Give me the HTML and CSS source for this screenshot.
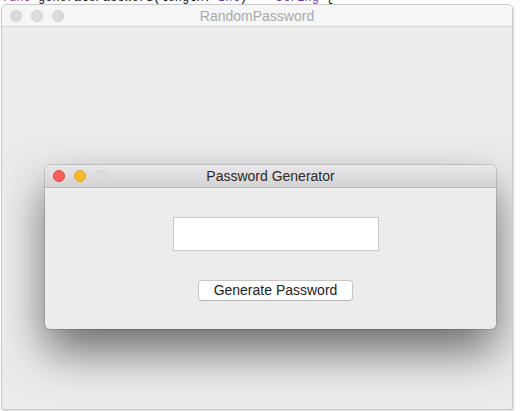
FILE: index.html
```html
<!DOCTYPE html>
<html lang="en">
<head>
    <meta charset="UTF-8">
    <title>RandomPassword</title>
    <link rel="stylesheet" href="styles.css">
</head>
<body>

<div class="code-strip">
    <span class="code-line"><span class="kw">func</span> generatePassword(length: <span class="ty">Int</span>) -&gt; <span class="ty">String</span> {</span>
</div>

<div class="window">
    <div class="titlebar">
        <div class="lights">
            <span class="light off"></span>
            <span class="light off"></span>
            <span class="light off"></span>
        </div>
        <div class="title">RandomPassword</div>
    </div>

    <div class="content">
        <div class="dialog">
            <div class="dialog-bar">
                <div class="lights">
                    <span class="light red"></span>
                    <span class="light yellow"></span>
                    <span class="light off"></span>
                </div>
                <div class="dialog-title">Password Generator</div>
            </div>
            <div class="dialog-body">
                <input type="text" class="password-field">
                <button class="generate-btn">Generate Password</button>
            </div>
        </div>
    </div>
</div>

</body>
</html>
```

FILE: styles.css
```css
body {
    margin: 0;
    padding: 0;
    background-color: #ffffff;
    font-family: "Liberation Sans", Arial, sans-serif;
    width: 520px;
    height: 411px;
    overflow: hidden;
}

/* code editor peeking out behind the window */
.code-strip {
    height: 4px;
    overflow: hidden;
    padding-left: 2px;
}

.code-line {
    display: block;
    margin-top: -8px;
    font-family: "Liberation Mono", monospace;
    font-size: 12px;
    line-height: 12px;
    color: #111;
    white-space: nowrap;
}

.code-line .kw {
    color: #b0279a;
}

.code-line .ty {
    color: #6d3fb0;
}

.window {
    margin-left: 1px;
    width: 510px;
    height: 404px;
    background-color: #ececec;
    border: 1px solid #c9c9c9;
    border-radius: 5px 5px 2px 2px;
    box-shadow: 1px 1px 2px rgba(0, 0, 0, 0.15);
    display: flex;
    flex-direction: column;
    overflow: hidden;
}

.titlebar {
    height: 21px;
    background-color: #f6f6f6;
    border-bottom: 1px solid #d6d6d6;
    display: flex;
    align-items: center;
    position: relative;
}

.lights {
    display: flex;
    gap: 9px;
    padding-left: 8px;
}

.light {
    width: 12px;
    height: 12px;
    border-radius: 50%;
    box-sizing: border-box;
}

.light.off {
    background-color: #dcdcdc;
    border: 1px solid #d0d0d0;
}

.light.red {
    background-color: #fc5f57;
    border: 1px solid #e2463f;
}

.light.yellow {
    background-color: #fdbc2e;
    border: 1px solid #e1a116;
}

.title {
    position: absolute;
    left: 0;
    right: 0;
    text-align: center;
    font-size: 14px;
    color: #aaaaaa;
}

.content {
    flex: 1;
    padding: 138px 0 0 43px;
}

.dialog {
    width: 451px;
    height: 164px;
    background-color: #ececec;
    border-radius: 5px;
    box-shadow: 0 0 0 1px rgba(0, 0, 0, 0.12), 0 22px 46px rgba(0, 0, 0, 0.55);
    overflow: hidden;
}

.dialog-bar {
    height: 22px;
    background: linear-gradient(#e9e7e9, #d4d2d4);
    border-bottom: 1px solid #b9b9b9;
    display: flex;
    align-items: center;
    position: relative;
}

.dialog-bar .lights {
    padding-left: 8px;
    gap: 9px;
}

.dialog-title {
    position: absolute;
    left: 0;
    right: 0;
    text-align: center;
    font-size: 14px;
    color: #2a2a2a;
}

.dialog-body {
    display: flex;
    flex-direction: column;
    align-items: center;
    padding: 29px 0 0 10px;
}

.password-field {
    width: 206px;
    height: 34px;
    box-sizing: border-box;
    background-color: #fff;
    border: 1px solid #c9c9c9;
    border-radius: 0;
    margin: 0;
    padding: 0 4px;
}

.generate-btn {
    margin-top: 29px;
    width: 155px;
    height: 21px;
    box-sizing: border-box;
    background-color: #fff;
    border: 1px solid #c6c6c6;
    border-bottom-color: #b4b4b4;
    border-radius: 4px;
    font-family: "Liberation Sans", Arial, sans-serif;
    font-size: 14px;
    line-height: 17px;
    color: #222;
    padding: 0 0 1px 0;
}
```
